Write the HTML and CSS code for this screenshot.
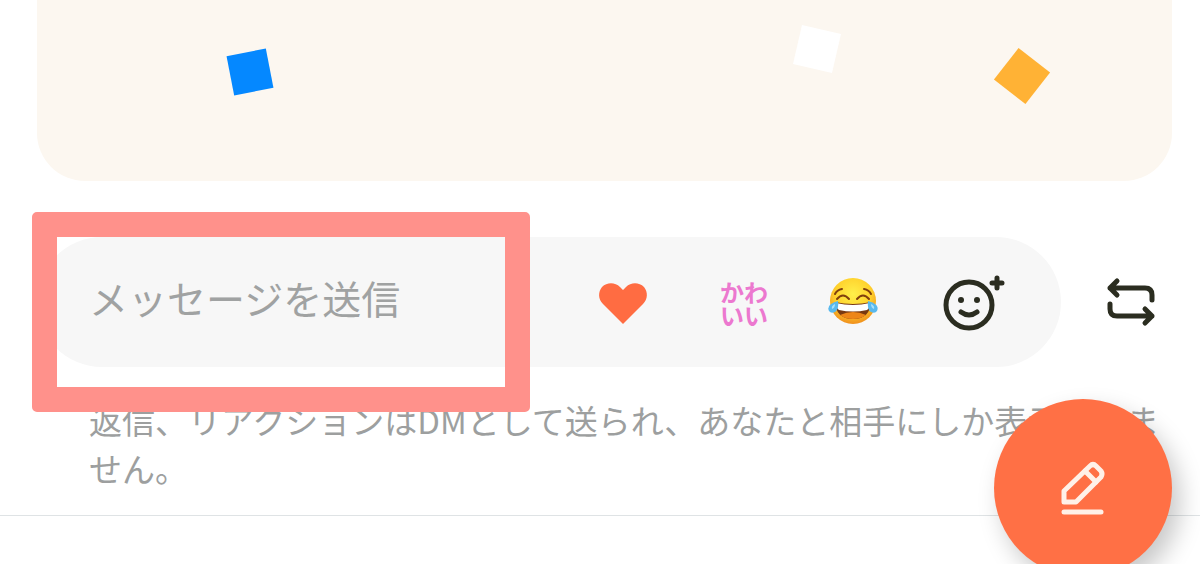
FILE: index.html
```
<!DOCTYPE html>
<html lang="ja">
<head>
<meta charset="utf-8">
<meta name="viewport" content="width=device-width, initial-scale=1">
<title>メッセージを送信</title>
<link rel="stylesheet" href="styles.css">
</head>
<body>

<main class="post">
  <div class="card">
    <span class="confetti blue"></span>
    <span class="confetti white"></span>
    <span class="confetti orange"></span>
  </div>

  <div class="composer">
    <form class="message-bar">
      <input type="text" class="message-input" placeholder="メッセージを送信" aria-label="メッセージを送信">
      <div class="reactions">
        <button type="button" aria-label="ハート">
          <svg width="64" height="56" viewBox="0 0 64 56">
            <path fill="#ff6c42" d="M27 49 L7 29 C2 24 2 17 6 12 C11 7 19 7 24 12 L27 15 L30 12 C35 7 43 7 48 12 C52 17 52 24 47 29 Z"/>
          </svg>
        </button>
        <button type="button" class="kawaii">かわ<br>いい</button>
        <button type="button" aria-label="うれし泣き">
          <svg width="52" height="56" viewBox="0 0 52 56">
            <defs>
              <radialGradient id="face" cx="50%" cy="35%" r="65%">
                <stop offset="0" stop-color="#fff04a"/>
                <stop offset="0.6" stop-color="#ffd12c"/>
                <stop offset="1" stop-color="#f08f1d"/>
              </radialGradient>
            </defs>
            <circle cx="25" cy="26" r="23" fill="url(#face)"/>
            <g fill="none" stroke="#81400d" stroke-width="2" stroke-linecap="round">
              <path d="M7 19 Q9 15 14 14"/>
              <path d="M43 19 Q41 15 36 14"/>
              <path d="M9 24 Q15 17 21 24"/>
              <path d="M29 24 Q35 17 41 24"/>
            </g>
            <path fill="#783912" d="M7 27 Q25 31 43 27 Q42 44 25 44 Q8 44 7 27 Z"/>
            <path fill="#fff" d="M8 28 Q25 32 42 28 Q42 33 39 35 Q25 38 11 35 Q8 33 8 28 Z"/>
            <path fill="#ed8619" d="M12 40 Q25 34 38 40 Q33 44 25 44 Q17 44 12 40 Z"/>
            <path fill="#59b9ee" d="M10 26 Q11 35 7 37 Q3 39 1 36 Q-1 32 3 29 Q6 27 10 26 Z"/>
            <path fill="#59b9ee" d="M40 26 Q39 35 43 37 Q47 39 49 36 Q51 32 47 29 Q44 27 40 26 Z"/>
            <path fill="#a9e0fa" d="M7 29 Q7 33 4 34 Q3 31 7 29 Z M43 29 Q43 33 46 34 Q47 31 43 29 Z"/>
          </svg>
        </button>
        <button type="button" aria-label="リアクションを追加">
          <svg width="66" height="60" viewBox="0 0 66 60" fill="none" stroke="#2b2d20" stroke-width="5" stroke-linecap="round">
            <circle cx="29" cy="32" r="23"/>
            <path d="M21 39 Q29 45 37 39"/>
            <path d="M57 5 V15 M52 10 H62"/>
            <circle cx="21" cy="27" r="3" fill="#2b2d20" stroke="none"/>
            <circle cx="37" cy="27" r="3" fill="#2b2d20" stroke="none"/>
          </svg>
        </button>
      </div>
    </form>
    <button type="button" class="repost" aria-label="再投稿">
      <svg width="52" height="52" viewBox="0 0 52 52" fill="none" stroke="#2b2d20" stroke-width="5" stroke-linecap="round" stroke-linejoin="round">
        <path d="M12 5 L5 12 L12 19 M5 12 H40 Q47 12 47 19 V24"/>
        <path d="M40 33 L47 40 L40 47 M47 40 H12 Q5 40 5 33 V28"/>
      </svg>
    </button>
    <div class="highlight"></div>
  </div>

  <p class="note">返信、リアクションはDMとして送られ、あなたと相手にしか表示されません。</p>
</main>

<button type="button" class="compose" aria-label="新規作成">
  <svg width="48" height="58" viewBox="0 0 48 58" fill="none" stroke="#fff1e8" stroke-width="5" stroke-linecap="round" stroke-linejoin="round">
    <path d="M5 43 V32 L31 7 Q34 4 37 7 L42 12 Q44 15 42 18 L17 43 Z"/>
    <path d="M26 12 L37 23"/>
    <path d="M5 53 H42"/>
  </svg>
</button>

</body>
</html>
```
FILE: styles.css
```
* {
  box-sizing: border-box;
}
body {
  margin: 0;
  background-color: #fff;
  color: #9d9f9f;
  font-family: "Noto Sans CJK JP", sans-serif;
}
button {
  display: flex;
  align-items: center;
  justify-content: center;
  padding: 0;
  border: none;
  background: none;
  font-family: inherit;
  cursor: pointer;
}
.post {
  padding: 0 28px 23px 37px;
  border-bottom: 1px solid #dfe3e5;
}
.card {
  position: relative;
  height: 181px;
  border-radius: 0 0 48px 48px;
  background-color: #fcf7f0;
}
/* confetti scattered over the card */
.confetti {
  position: absolute;
  width: 40px;
  height: 40px;
}
.blue {
  left: 17%;
  top: 52px;
  background-color: #0588ff;
  transform: rotate(-11deg);
}
.white {
  left: 67%;
  top: 29px;
  background-color: #fff;
  transform: rotate(13deg);
}
.orange {
  left: 85%;
  top: 56px;
  background-color: #ffb235;
  transform: rotate(38deg);
}
.composer {
  position: relative;
  display: flex;
  align-items: center;
  gap: 29px;
  margin-top: 56px;
}
.message-bar {
  flex: 1;
  display: flex;
  align-items: center;
  min-width: 0;
  height: 130px;
  padding: 0 55px 0 52px;
  border-radius: 65px;
  background-color: #f7f7f7;
}
.message-input {
  flex: 1;
  min-width: 0;
  padding: 0 0 10px;
  border: none;
  outline: none;
  background: none;
  color: #333;
  font-family: inherit;
  font-size: 39px;
}
.message-input::placeholder {
  color: #a0a2a2;
  opacity: 1;
}
.reactions {
  display: flex;
  align-items: center;
  gap: 60px;
  padding-top: 2px;
}
.kawaii {
  color: #ec78cf;
  font-size: 24px;
  font-weight: bold;
  line-height: 23px;
}
.repost {
  width: 82px;
  height: 82px;
}
/* frame around the message field */
.highlight {
  position: absolute;
  top: -25px;
  left: -5px;
  width: 498px;
  height: 200px;
  border: 25px solid #ff918b;
  border-radius: 5px;
  pointer-events: none;
}
.note {
  margin: 29px 0 0;
  padding-left: 52px;
  font-size: 33px;
  line-height: 48px;
}
.compose {
  position: fixed;
  right: 28px;
  bottom: -13px;
  width: 178px;
  height: 178px;
  border-radius: 50%;
  background-color: #ff7045;
  box-shadow: 8px 12px 24px rgba(0, 0, 0, 0.22);
}
```
